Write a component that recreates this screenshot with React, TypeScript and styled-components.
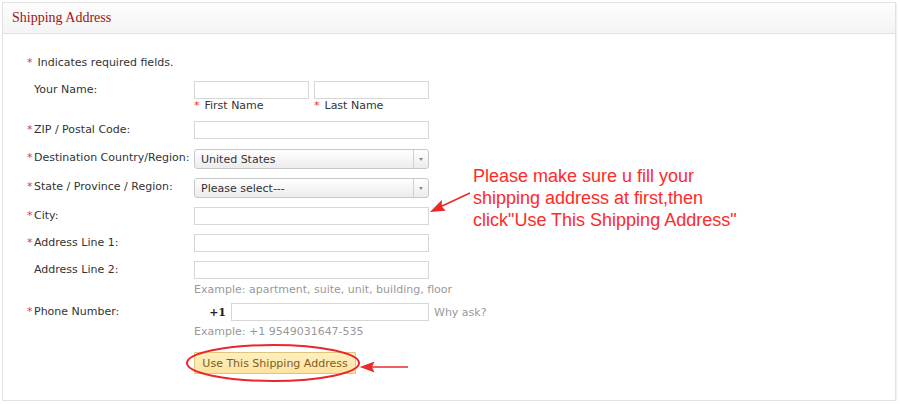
import * as React from "react";
import styled, { createGlobalStyle } from "styled-components";

const GlobalStyle = createGlobalStyle`
  html, body {
    margin: 0;
    padding: 0;
    background: #ffffff;
  }
  body {
    font-family: "DejaVu Sans", Verdana, sans-serif;
    font-size: 11px;
    color: #333333;
  }
`;

const Panel = styled.div`
  position: relative;
  margin: 2px 0 0 2px;
  width: 892px;
  height: 397px;
  border: 1px solid #e2e2e2;
  box-shadow: 1px 1px 1px #f0f0f0;
  background: #ffffff;
`;

const PanelHeader = styled.div`
  height: 30px;
  display: flex;
  align-items: center;
  padding-left: 9px;
  background: linear-gradient(#fdfdfd, #f4f4f4);
  border-bottom: 1px solid #e0e0e0;
  font-family: "Liberation Serif", Georgia, serif;
  font-size: 14px;
  color: #9e1414;
`;

const PanelBody = styled.div`
  padding: 22px 0 0 24px;
`;

const Star = styled.span`
  color: #d63a3a;
  display: inline-block;
  width: 7px;
`;

const Note = styled.div`
  height: 14px;
  line-height: 14px;
  margin-bottom: 11px;
`;

const Row = styled.div<{ $gap: number }>`
  display: flex;
  align-items: flex-start;
  margin-bottom: ${(p) => p.$gap}px;
`;

const Label = styled.div`
  width: 167px;
  flex: none;
  line-height: 16px;
  padding-top: 1px;
`;

const Field = styled.div`
  display: flex;
  flex-direction: column;
`;

const Inline = styled.div`
  display: flex;
  align-items: center;
`;

const TextBox = styled.div<{ $w: number }>`
  width: ${(p) => p.$w}px;
  height: 16px;
  border: 1px solid #d6d6d6;
  background: #ffffff;
`;

const Select = styled.div`
  width: 233px;
  height: 18px;
  border: 1px solid #c8c8c8;
  border-radius: 3px;
  background: linear-gradient(#ffffff, #ececec);
  display: flex;
  align-items: center;
`;

const SelectText = styled.span`
  flex: 1;
  padding-left: 6px;
  color: #333333;
`;

const SelectArrow = styled.span`
  width: 14px;
  height: 100%;
  border-left: 1px solid #d0d0d0;
  display: flex;
  align-items: center;
  justify-content: center;
  &::after {
    content: "";
    border-left: 2.5px solid transparent;
    border-right: 2.5px solid transparent;
    border-top: 3px solid #888888;
  }
`;

const SubLabel = styled.span<{ $w?: number }>`
  display: inline-block;
  width: ${(p) => p.$w ?? 120}px;
  line-height: 14px;
  color: #333333;
`;

const Hint = styled.div`
  color: #999999;
  line-height: 16px;
  padding-top: 3px;
`;

const Prefix = styled.span`
  font-weight: bold;
  color: #222222;
  width: 37px;
  text-align: right;
  padding-right: 5px;
  box-sizing: border-box;
  font-family: "DejaVu Serif", Georgia, serif;
`;

const WhyAsk = styled.span`
  color: #999999;
  margin-left: 5px;
`;

const Button = styled.button`
  margin-left: 167px;
  width: 162px;
  height: 22px;
  padding: 0;
  border: 1px solid #e2c37c;
  border-radius: 1px;
  background: linear-gradient(#fff0bf, #fde3a0);
  color: #7d5d24;
  font-family: "DejaVu Sans", Verdana, sans-serif;
  font-size: 11px;
`;

const Callout = styled.div`
  position: absolute;
  left: 470px;
  top: 162px;
  font-family: "Liberation Sans", Tahoma, sans-serif;
  font-size: 18px;
  line-height: 22px;
  color: #ff2a2a;
`;

const Overlay = styled.svg`
  position: absolute;
  left: -3px;
  top: -3px;
  pointer-events: none;
`;

export default function App() {
  return (
    <>
      <GlobalStyle />
      <Panel>
        <PanelHeader>Shipping Address</PanelHeader>
        <PanelBody>
          <Note>
            <Star>*</Star> Indicates required fields.
          </Note>
          <Row $gap={8}>
            <Label>
              <Star />Your Name:
            </Label>
            <Field>
              <Inline>
                <TextBox $w={113} />
                <span style={{ width: 5 }} />
                <TextBox $w={113} />
              </Inline>
              <Inline>
                <SubLabel>
                  <Star>*</Star> First Name
                </SubLabel>
                <SubLabel>
                  <Star>*</Star> Last Name
                </SubLabel>
              </Inline>
            </Field>
          </Row>
          <Row $gap={10}>
            <Label>
              <Star>*</Star>ZIP / Postal Code:
            </Label>
            <TextBox $w={233} />
          </Row>
          <Row $gap={9}>
            <Label>
              <Star>*</Star>Destination Country/Region:
            </Label>
            <Select>
              <SelectText>United States</SelectText>
              <SelectArrow />
            </Select>
          </Row>
          <Row $gap={9}>
            <Label>
              <Star>*</Star>State / Province / Region:
            </Label>
            <Select>
              <SelectText>Please select---</SelectText>
              <SelectArrow />
            </Select>
          </Row>
          <Row $gap={9}>
            <Label>
              <Star>*</Star>City:
            </Label>
            <TextBox $w={233} />
          </Row>
          <Row $gap={9}>
            <Label>
              <Star>*</Star>Address Line 1:
            </Label>
            <TextBox $w={233} />
          </Row>
          <Row $gap={5}>
            <Label>
              <Star />Address Line 2:
            </Label>
            <Field>
              <TextBox $w={233} />
              <Hint>Example: apartment, suite, unit, building, floor</Hint>
            </Field>
          </Row>
          <Row $gap={12}>
            <Label>
              <Star>*</Star>Phone Number:
            </Label>
            <Field>
              <Inline>
                <Prefix>+1</Prefix>
                <TextBox $w={196} />
                <WhyAsk>Why ask?</WhyAsk>
              </Inline>
              <Hint>Example: +1 9549031647-535</Hint>
            </Field>
          </Row>
          <Button>Use This Shipping Address</Button>
        </PanelBody>
        <Callout>
          Please make sure u fill your
          <br />
          shipping address at first,then
          <br />
          click"Use This Shipping Address"
        </Callout>
        <Overlay width={900} height={404}>
          <ellipse cx={273} cy={363} rx={86} ry={18} fill="none" stroke="#e8262b" strokeWidth={2} />
          <g stroke="#ea2a2a" strokeWidth={1.6} fill="#ea2a2a">
            <line x1={408} y1={367} x2={370} y2={367} />
            <polygon points="362,367 373,363 371,367 373,371" />
            <line x1={470} y1={193} x2={440} y2={207} />
            <polygon points="432,211 441,202 441,207 444,210" />
          </g>
        </Overlay>
      </Panel>
    </>
  );
}
